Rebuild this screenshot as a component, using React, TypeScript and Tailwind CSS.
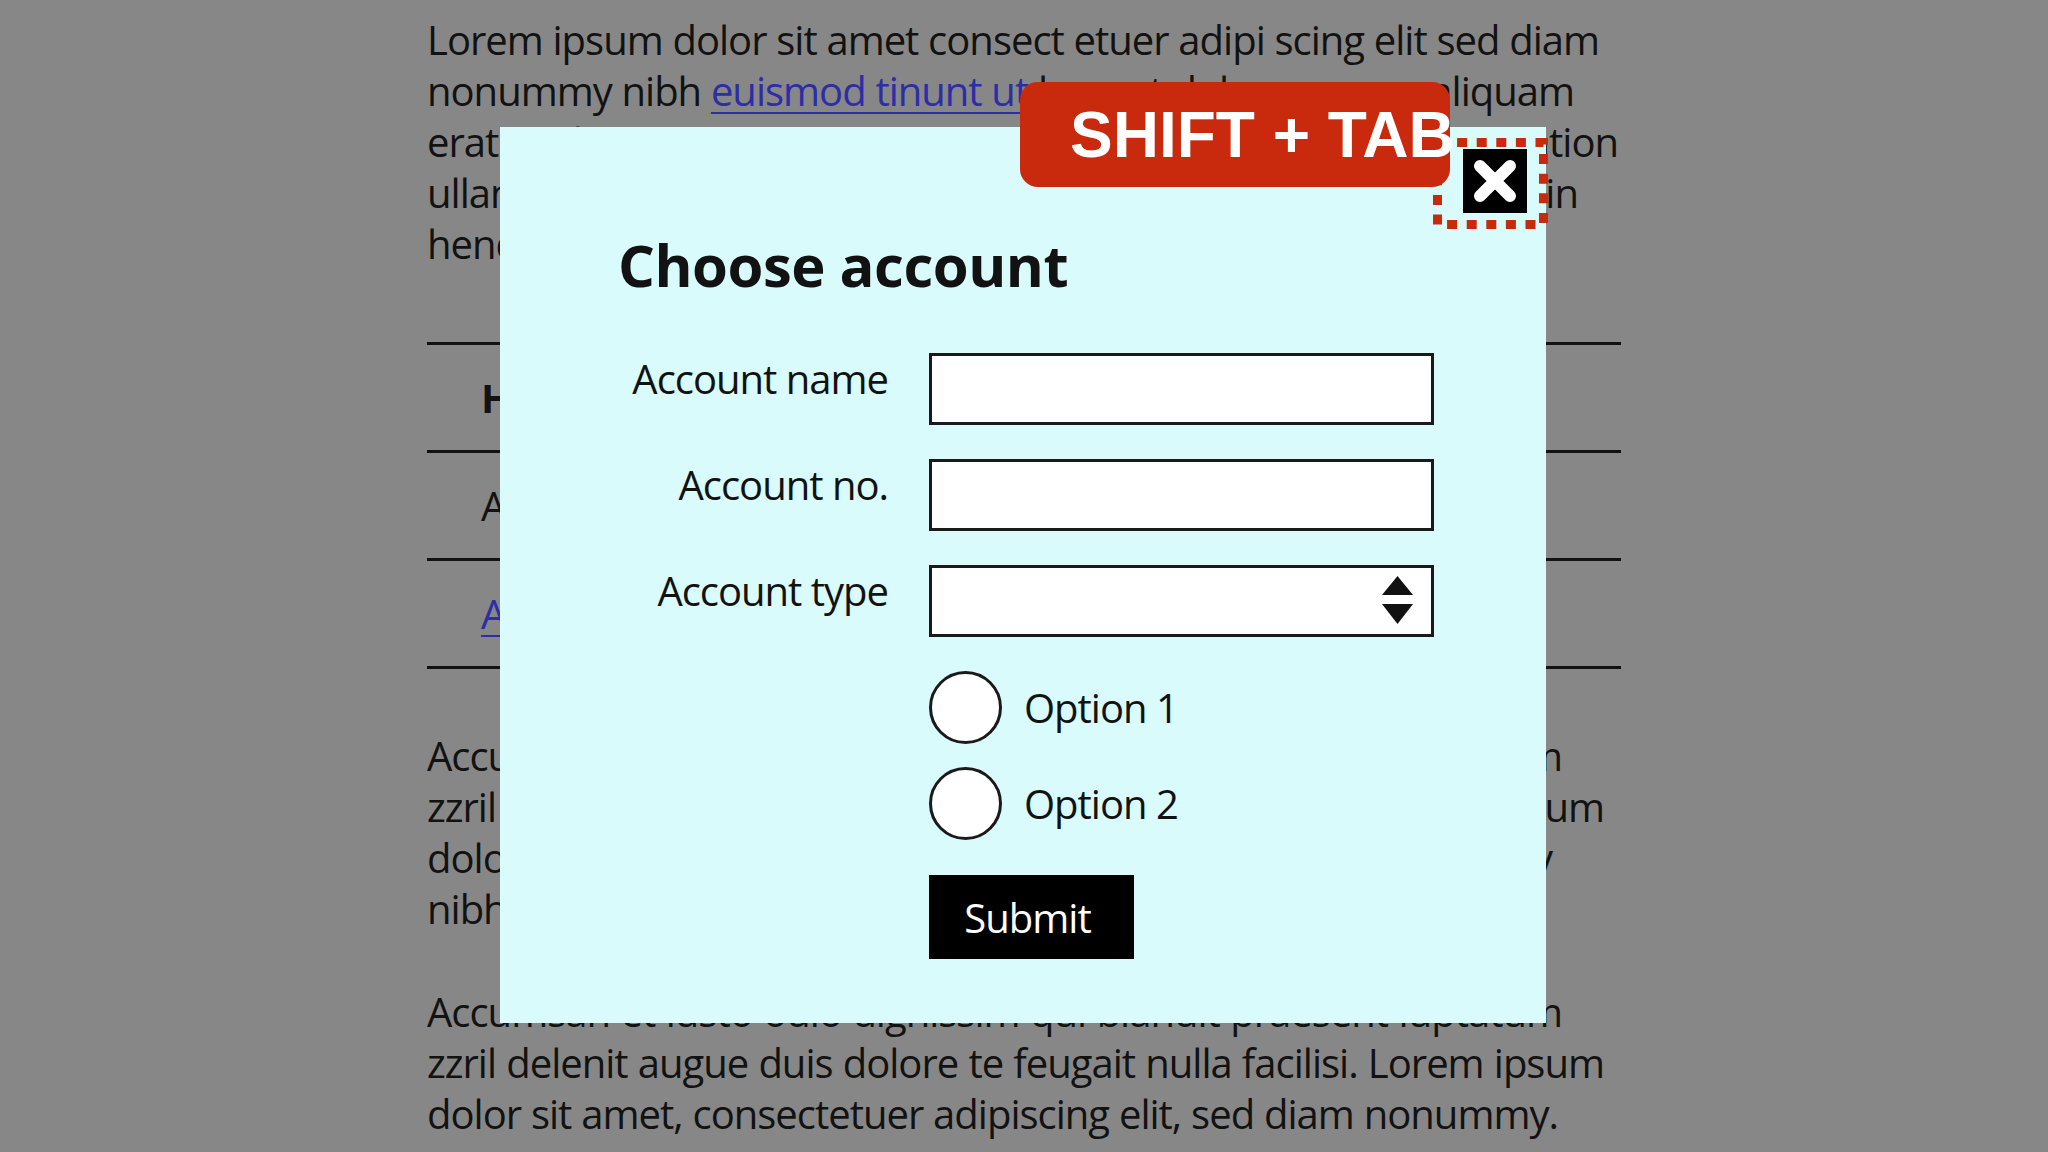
import React from "react";

const body = "font-['Open_Sans',sans-serif] text-[40px] leading-[51px] tracking-[-1px] text-[#121212]";
const line = "whitespace-nowrap text-justify [text-align-last:justify]";

const Link = ({ children }: { children: React.ReactNode }) => (
  <span className="text-[#2d2da6] underline decoration-2 underline-offset-[6px]">{children}</span>
);

const Field = ({ label, children }: { label: string; children: React.ReactNode }) => (
  <div className="flex items-start gap-[41px]">
    <label className="w-[266px] text-right">{label}</label>
    {children}
  </div>
);

const Radio = ({ label }: { label: string }) => (
  <label className="flex items-center gap-[22px]">
    <span className="h-[73px] w-[73px] rounded-full border-[3px] border-[#1a1a1a] bg-white" />
    <span>{label}</span>
  </label>
);

export default function App() {
  return (
    <div className="relative h-[1152px] w-[2048px] overflow-hidden bg-[#878787]">
      {/* page underneath the dialog */}
      <div className={`${body} pl-[427px] pt-[14px]`}>
        <div className="w-[1172px]">
          <p className={line}>Lorem ipsum dolor sit amet consect etuer adipi scing elit sed diam</p>
          <p className={`${line} w-[1147px]`}>
            nonummy nibh <Link>euismod tinunt ut</Link> laoreet dolore magna aliquam
          </p>
          <p className={`${line} w-[1191px]`}>erat volutpat. Ut wisi enim ad minim veniam, quis tation</p>
          <p className={`${line} w-[1151px]`}>ullamcorper suscipit lobortis nisl ut aliquip ex ea commodo in</p>
          <p className="whitespace-nowrap">hendrerit in vulputate velit esse molestie consequat</p>
        </div>

        <div className="mt-[73px] w-[1194px] border-b-[3px] border-[#121212]">
          <div className="flex h-[108px] items-center border-t-[3px] border-[#121212] pl-[54px] font-bold">Heading</div>
          <div className="flex h-[108px] items-center border-t-[3px] border-[#121212] pl-[54px]">Account</div>
          <div className="flex h-[108px] items-center border-t-[3px] border-[#121212] pl-[54px]">
            <Link>Add account</Link>
          </div>
        </div>

        <div className="mt-[61px]">
          <p className={`${line} w-[1135px]`}>Accumsan et iusto odio dignissim qui blandit praesent luptatum</p>
          <p className={`${line} w-[1177px]`}>zzril delenit augue duis dolore te feugait nulla facilisi. Lorem ipsum</p>
          <p className={`${line} w-[1125px]`}>dolor sit amet, consectetuer adipiscing elit, sed diam nonummy</p>
          <p className="whitespace-nowrap">nibh euismod tincidunt ut laoreet dolore magna.</p>
        </div>

        <div className="mt-[52px]">
          <p className={`${line} w-[1135px]`}>Accumsan et iusto odio dignissim qui blandit praesent luptatum</p>
          <p className={`${line} w-[1177px]`}>zzril delenit augue duis dolore te feugait nulla facilisi. Lorem ipsum</p>
          <p className={`${line} w-[1131px]`}>dolor sit amet, consectetuer adipiscing elit, sed diam nonummy.</p>
        </div>
      </div>

      {/* dialog */}
      <div className={`${body} absolute left-[500px] top-[127px] h-[896px] w-[1046px] bg-[#d9fbfb] pl-[122px] pt-[109px]`}>
        <h1 className="-ml-[4px] text-[58px] font-bold leading-[58px] tracking-[-0.5px]">Choose account</h1>

        <form className="mt-[59px] flex flex-col gap-[34px]">
          <Field label="Account name">
            <input className="h-[72px] w-[505px] border-[3px] border-[#1a1a1a] bg-white" />
          </Field>
          <Field label="Account no.">
            <input className="h-[72px] w-[505px] border-[3px] border-[#1a1a1a] bg-white" />
          </Field>
          <Field label="Account type">
            <div className="relative h-[72px] w-[505px] border-[3px] border-[#1a1a1a] bg-white">
              <svg className="absolute right-[18px] top-[8px]" width="31" height="48" viewBox="0 0 31 48">
                <polygon points="15.5,0 31,19 0,19" fill="#111" />
                <polygon points="0,28 31,28 15.5,48" fill="#111" />
              </svg>
            </div>
          </Field>

          <div className="ml-[307px] flex flex-col gap-[23px]">
            <Radio label="Option 1" />
            <Radio label="Option 2" />
          </div>

          <div className="ml-[307px] mt-px">
            <button type="button" className="h-[84px] w-[205px] bg-black pr-[8px] text-white">
              Submit
            </button>
          </div>
        </form>
      </div>

      {/* focus ring round the close button */}
      <svg className="absolute left-[1433px] top-[138px]" width="115" height="91" viewBox="0 0 115 91">
        <rect x="4.5" y="4.5" width="106" height="82" fill="none" stroke="#c9290d" strokeWidth="9" strokeDasharray="10 9.6" />
      </svg>
      <button type="button" className="absolute left-[1463px] top-[149px] h-[64px] w-[64px] bg-black">
        <svg width="64" height="64" viewBox="0 0 64 64">
          <path d="M17 17 L47 47 M47 17 L17 47" stroke="#fff" strokeWidth="12" strokeLinecap="round" />
        </svg>
      </button>

      {/* key hint */}
      <div className="absolute left-[1020px] top-[82px] flex h-[105px] w-[430px] items-center rounded-[18px] bg-[#c9290d] pl-[50px]">
        <span className="whitespace-nowrap font-['Liberation_Sans',Arial,sans-serif] text-[64px] font-bold leading-none text-white">
          SHIFT + TAB
        </span>
      </div>
    </div>
  );
}
